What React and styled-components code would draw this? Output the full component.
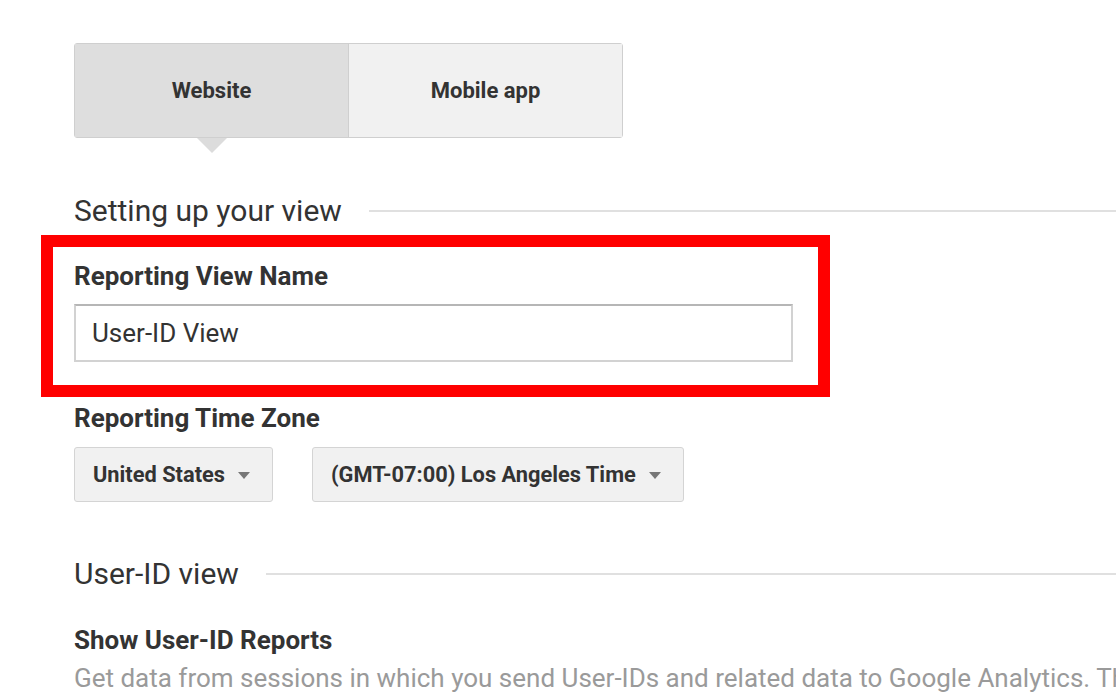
import React from 'react';
import styled, { createGlobalStyle } from 'styled-components';

const GlobalStyle = createGlobalStyle`
  html, body {
    margin: 0;
    padding: 0;
    background: #fff;
    overflow: hidden;
  }
  body {
    font-family: Roboto, "Liberation Sans", Arial, sans-serif;
    color: #333;
  }
`;

const Page = styled.div`
  width: 1116px;
  height: 698px;
  padding: 43px 0 0 74px;
  box-sizing: border-box;
  overflow: hidden;
`;

const TabGroup = styled.div`
  display: flex;
  width: 549px;
  height: 95px;
  border: 1px solid #cfcfcf;
  border-radius: 3px;
  box-sizing: border-box;
`;

const Tab = styled.div`
  position: relative;
  flex: 1;
  display: flex;
  align-items: center;
  justify-content: center;
  font-size: 22px;
  font-weight: 700;
  color: #333;
  background: ${(p) => (p.active ? '#dedede' : '#f1f1f1')};
  & + & {
    border-left: 1px solid #cfcfcf;
  }
  /* pointer under the active tab */
  ${(p) =>
    p.active &&
    `
    &::after {
      content: '';
      position: absolute;
      left: 50%;
      bottom: -16px;
      margin-left: -15px;
      border-left: 15px solid transparent;
      border-right: 15px solid transparent;
      border-top: 15px solid #dcdcdc;
    }
  `}
`;

const SectionHeading = styled.div`
  display: flex;
  align-items: center;
  margin-top: ${(p) => p.top}px;
  font-size: 30px;
  line-height: 34px;
  font-weight: 400;
  color: #333;
  &::after {
    content: '';
    flex: 1;
    height: 2px;
    background: #e0e0e0;
    margin-left: 27px;
  }
`;

const Highlight = styled.div`
  width: 789px;
  margin: 7px 0 0 -33px;
  border: 12px solid #ff0000;
  box-sizing: border-box;
  padding: 14px 21px 23px;
`;

const Label = styled.div`
  margin-top: ${(p) => p.top || 0}px;
  font-size: 26px;
  line-height: 30px;
  font-weight: 700;
  color: #333;
`;

const TextInput = styled.input`
  display: block;
  width: 719px;
  height: 58px;
  margin-top: 13px;
  padding: 0 16px;
  box-sizing: border-box;
  border: 2px solid #d2d2d2;
  border-top-color: #b6b6b6;
  border-radius: 0;
  font-family: Roboto, "Liberation Sans", Arial, sans-serif;
  font-size: 26px;
  color: #333;
  outline: none;
`;

const SelectRow = styled.div`
  display: flex;
  gap: 39px;
  margin-top: 14px;
`;

const SelectButton = styled.div`
  display: flex;
  align-items: center;
  gap: 13px;
  height: 55px;
  padding: 0 22px 0 18px;
  box-sizing: border-box;
  background: #f1f1f1;
  border: 1px solid #d4d4d4;
  border-radius: 3px;
  font-size: 21.8px;
  font-weight: 700;
  color: #333;
  &::after {
    content: '';
    border-left: 6px solid transparent;
    border-right: 6px solid transparent;
    border-top: 7px solid #777;
    margin-top: 2px;
  }
`;

const Description = styled.div`
  margin-top: 8px;
  font-size: 26px;
  line-height: 30px;
  color: #9a9a9a;
  white-space: nowrap;
`;

export default function App() {
  return (
    <>
      <GlobalStyle />
      <Page>
        <TabGroup>
          <Tab active>Website</Tab>
          <Tab>Mobile app</Tab>
        </TabGroup>

        <SectionHeading top={56}>Setting up your view</SectionHeading>

        <Highlight>
          <Label>Reporting View Name</Label>
          <TextInput defaultValue="User-ID View" />
        </Highlight>

        <Label top={6}>Reporting Time Zone</Label>
        <SelectRow>
          <SelectButton>United States</SelectButton>
          <SelectButton>(GMT-07:00) Los Angeles Time</SelectButton>
        </SelectRow>

        <SectionHeading top={55}>User-ID view</SectionHeading>

        <Label top={34}>Show User-ID Reports</Label>
        <Description>
          Get data from sessions in which you send User-IDs and related data to Google Analytics. This
        </Description>
      </Page>
    </>
  );
}
